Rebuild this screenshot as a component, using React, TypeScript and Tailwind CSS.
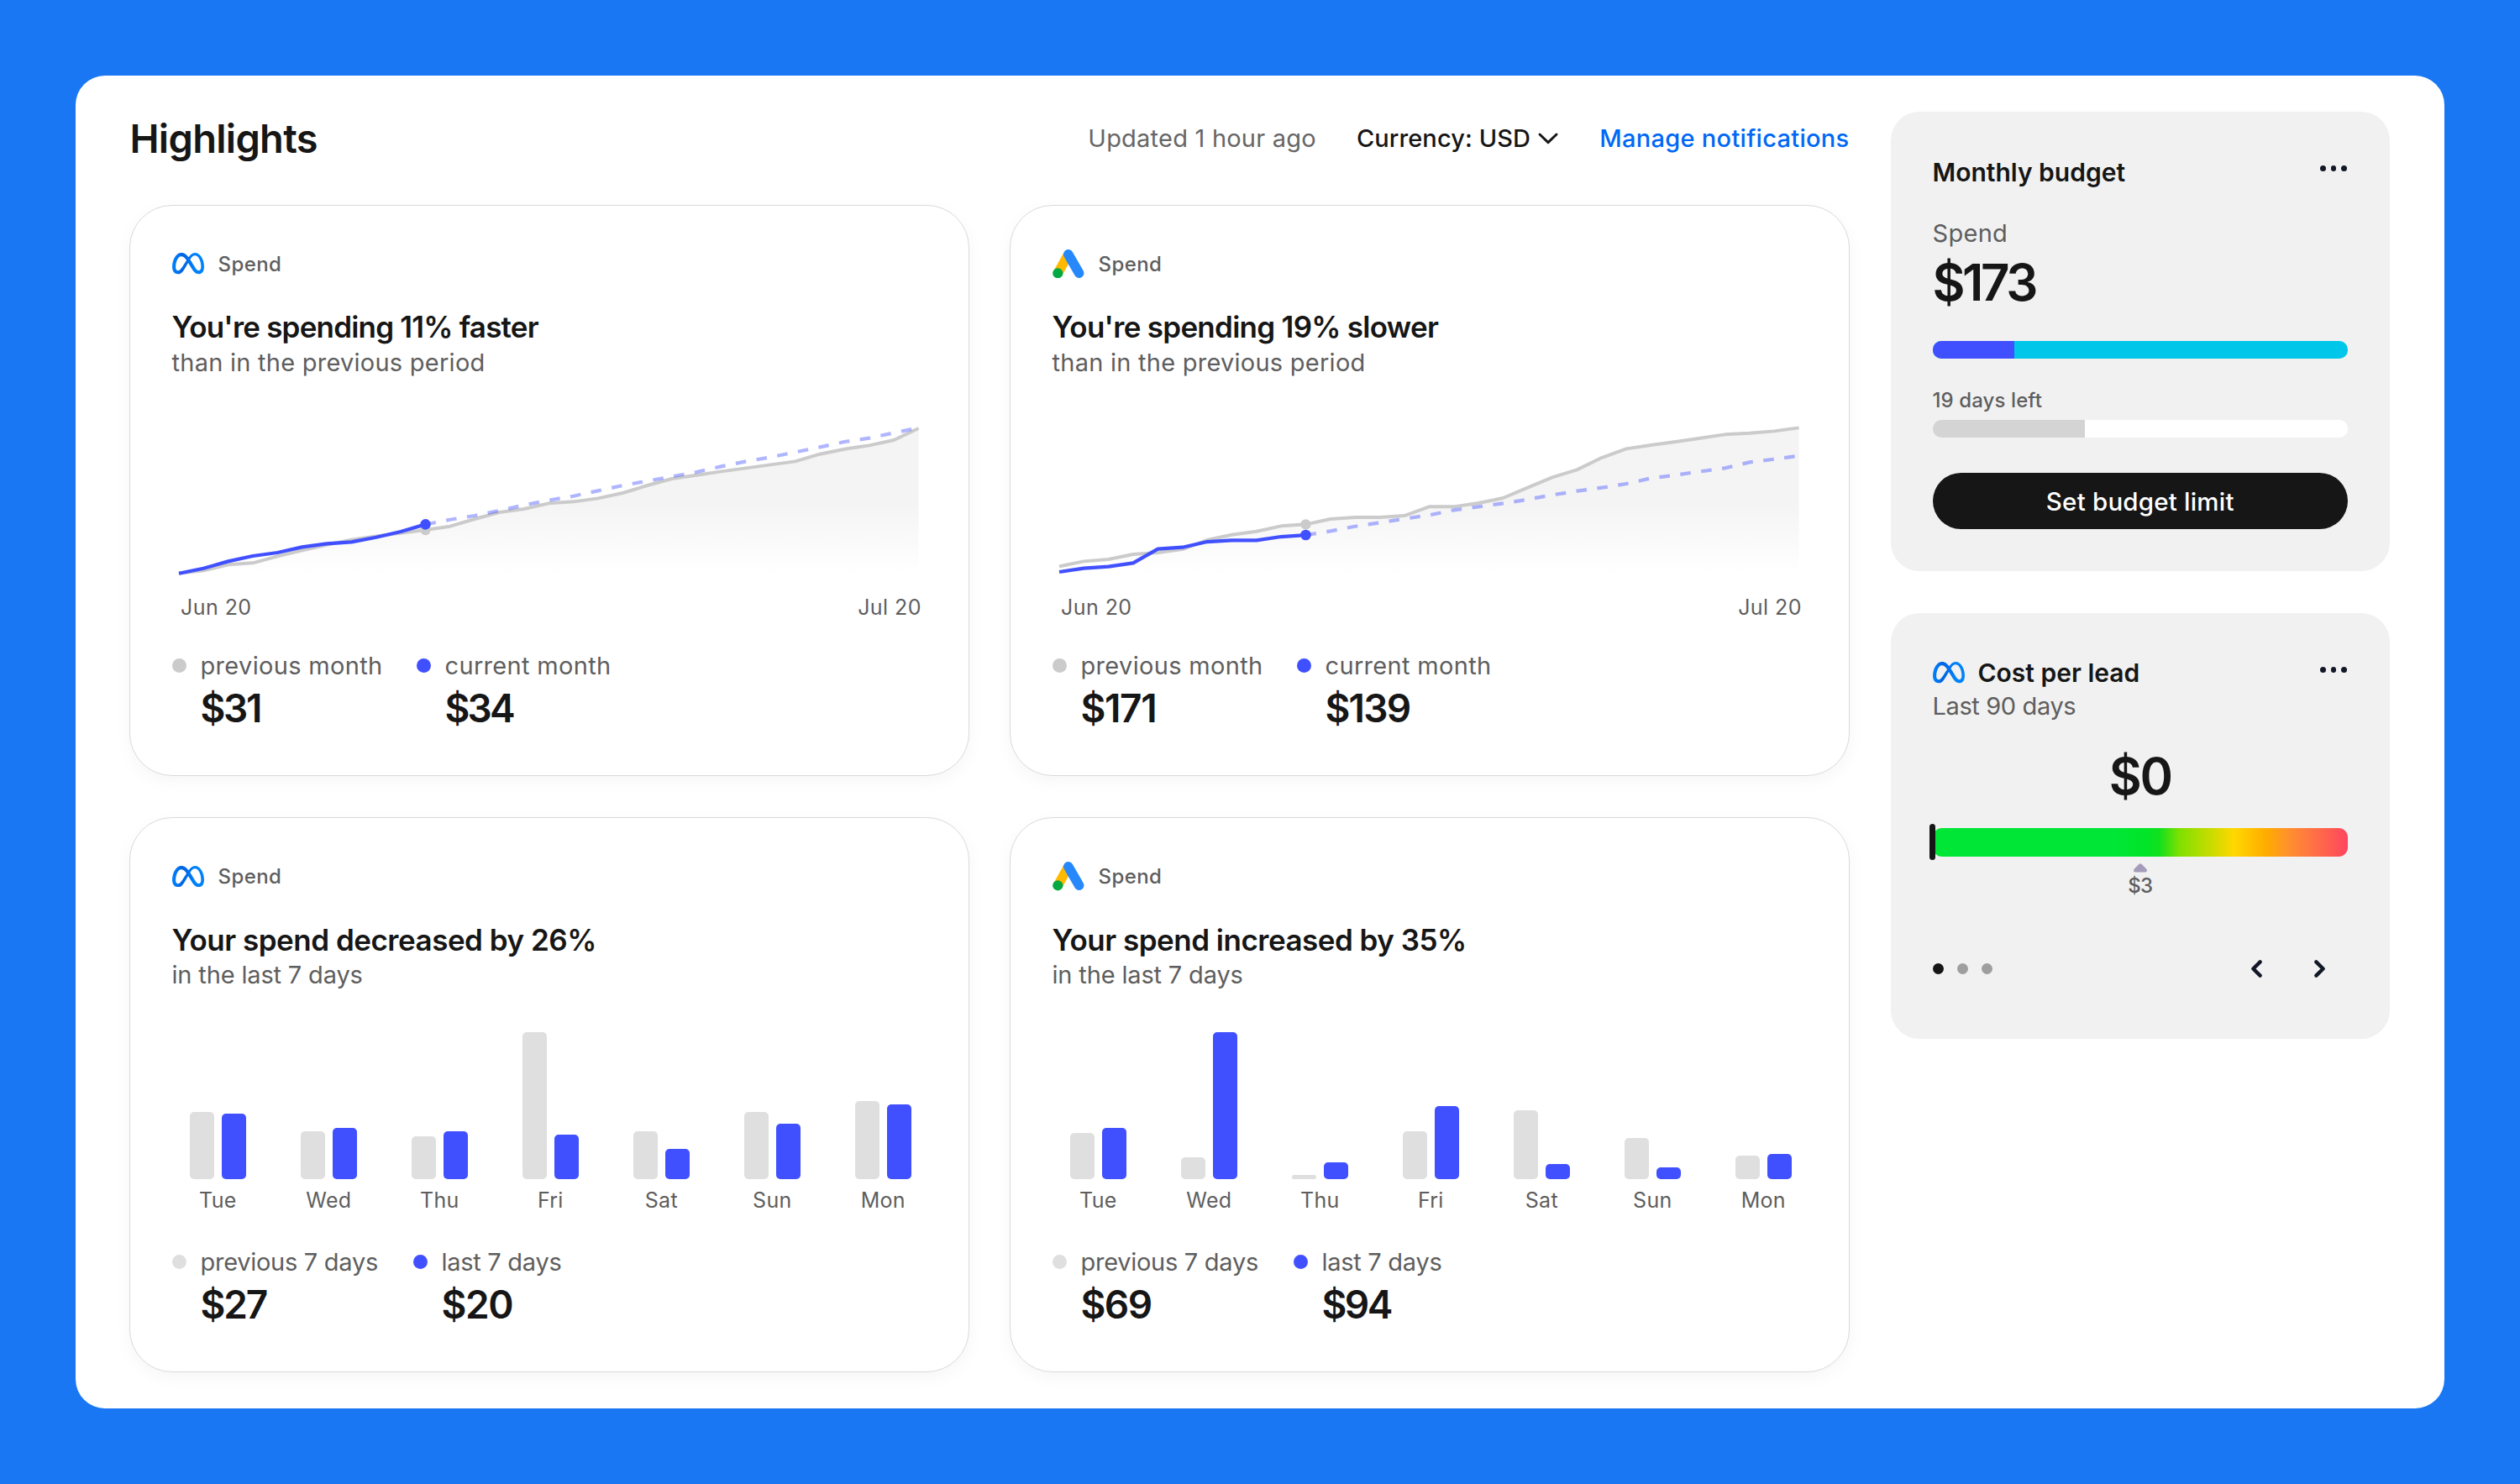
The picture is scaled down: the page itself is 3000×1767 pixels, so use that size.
import type { ReactNode } from "react";

const PREV_META = [12, 22, 43, 49, 73, 94, 114, 132, 145, 156, 167, 180, 206, 230, 242, 262, 268, 280, 299, 326, 350, 363, 376, 388, 400, 412, 438, 456, 469, 488, 530];
const CUR_META = [12, 30, 55, 74, 86, 106, 118, 124, 141, 161, 187];
const PROJ_META = [187, 204, 218, 236, 256, 273, 288, 307, 326, 342, 358, 374, 394, 412, 427, 445, 463, 482, 495, 514, 532];

const PREV_ADS = [37, 55, 62, 80, 86, 98, 131, 150, 162, 181, 187, 206, 212, 212, 218, 250, 250, 263, 281, 318, 355, 382, 425, 457, 470, 482, 495, 508, 513, 520, 532];
const CUR_ADS = [17, 30, 36, 49, 99, 105, 125, 130, 130, 143, 149];
const PROJ_ADS = [149, 163, 180, 193, 207, 220, 238, 250, 262, 276, 292, 306, 318, 332, 352, 363, 376, 388, 409, 420, 432];

const STEP = 29.35;

function MetaIcon() {
  return (
    <svg className="h-[25.3px] w-[38px] shrink-0" viewBox="0 4 24 16">
      <defs>
        <linearGradient id="meta-blue" x1="0" y1="0" x2="1" y2="0">
          <stop offset="0" stopColor="#0080fb" />
          <stop offset="0.12" stopColor="#0078f4" />
          <stop offset="0.3" stopColor="#0064e0" />
          <stop offset="0.5" stopColor="#006fee" />
          <stop offset="0.7" stopColor="#0082fb" />
          <stop offset="1" stopColor="#0082fb" />
        </linearGradient>
      </defs>
      <path
        fill="url(#meta-blue)"
        d="M6.915 4.03c-1.968 0-3.683 1.28-4.871 3.113C.704 9.208 0 11.883 0 14.449c0 .706.07 1.369.21 1.973a6.624 6.624 0 0 0 .265.86 5.297 5.297 0 0 0 .371.761c.696 1.159 1.818 1.927 3.593 1.927 1.497 0 2.633-.671 3.965-2.444.76-1.012 1.144-1.626 2.663-4.32l.756-1.339.186-.325c.061.1.121.196.183.3l2.152 3.595c.724 1.21 1.665 2.556 2.47 3.314 1.046.987 1.992 1.22 3.06 1.22 1.075 0 1.876-.355 2.455-.843a3.743 3.743 0 0 0 .81-.973c.542-.939.861-2.127.861-3.745 0-2.72-.681-5.357-2.084-7.45-1.282-1.912-2.957-2.93-4.716-2.93-1.047 0-2.088.467-3.053 1.308-.652.57-1.257 1.29-1.82 2.05-.69-.875-1.335-1.547-1.958-2.056-1.182-.966-2.315-1.303-3.454-1.303zm10.16 2.053c1.147 0 2.188.758 2.992 1.999 1.132 1.748 1.647 4.195 1.647 6.4 0 1.548-.368 2.9-1.839 2.9-.58 0-1.027-.23-1.664-1.004-.496-.601-1.343-1.878-2.832-4.358l-.617-1.028a44.908 44.908 0 0 0-1.255-1.98c.07-.109.141-.224.211-.327 1.12-1.667 2.118-2.602 3.358-2.602zm-10.201.553c1.265 0 2.058.791 2.675 1.446.307.327.737.871 1.234 1.579l-1.02 1.566c-.757 1.163-1.882 3.017-2.837 4.338-1.191 1.649-1.81 1.817-2.486 1.817-.524 0-1.038-.237-1.383-.794-.263-.426-.464-1.13-.464-2.046 0-2.221.63-4.535 1.66-6.088.454-.687.964-1.226 1.533-1.533a2.264 2.264 0 0 1 1.088-.285z"
      />
    </svg>
  );
}

function AdsIcon() {
  return (
    <svg className="h-[34.5px] w-[38px] shrink-0" viewBox="0 0 38 34.5">
      <path d="M6.4 28.2 18.4 6.4" stroke="#ffb900" strokeWidth="11.4" strokeLinecap="butt" />
      <path d="M18.8 5.9 31.6 28.2" stroke="#2688fb" strokeWidth="11.6" strokeLinecap="round" />
      <circle cx="6.3" cy="28.3" r="6.1" fill="#00a944" />
    </svg>
  );
}

type Amount = { label: string; value: string; valueClass: string };

function Legend({ className, firstClass, dotClass, prev, cur, labelClass }: { className: string; firstClass: string; dotClass: string; prev: Amount; cur: Amount; labelClass: string }) {
  return (
    <div className={`flex ${className}`}>
      <div className={`flex ${firstClass}`}>
        <span className={`mt-[10px] size-[17px] shrink-0 rounded-full ${dotClass}`} />
        <div className="ml-[17px]">
          <div className={`text-[29px] leading-[38px] text-[#5e5e5e] ${labelClass}`}>{prev.label}</div>
          <div className={`mt-px text-[46px] leading-[60px] font-semibold ${prev.valueClass}`}>{prev.value}</div>
        </div>
      </div>
      <div className="flex">
        <span className="mt-[10px] size-[17px] shrink-0 rounded-full bg-[#4150ff]" />
        <div className="ml-[17px]">
          <div className={`text-[29px] leading-[38px] text-[#5e5e5e] ${labelClass}`}>{cur.label}</div>
          <div className={`mt-px text-[46px] leading-[60px] font-semibold ${cur.valueClass}`}>{cur.value}</div>
        </div>
      </div>
    </div>
  );
}

function Card({ icon, title, sub, subClass, titleClass, height, children }: { icon: ReactNode; title: string; sub: string; subClass: string; titleClass: string; height: string; children: ReactNode }) {
  return (
    <article className={`w-[1000px] rounded-[51px] border border-[#dadada] bg-white px-[50px] pt-[49.5px] shadow-[0_6px_20px_rgba(0,0,0,0.04)] ${height}`}>
      <div className="flex h-10 items-center gap-[17px]">
        {icon}
        <span className="mt-[1px] text-[24px] leading-[30px] font-medium tracking-[0.4px] text-[#5e5e5e]">Spend</span>
      </div>
      <h2 className={`mt-[33px] text-[35px] leading-[44px] font-semibold ${titleClass}`}>{title}</h2>
      <p className={`mt-[1.5px] text-[29px] leading-[38px] text-[#5e5e5e] ${subClass}`}>{sub}</p>
      {children}
    </article>
  );
}

function points(values: number[], start = 0) {
  return values.map((v, i) => `${((i + start) * STEP).toFixed(2)},${(186.7 - v / 3).toFixed(2)}`).join(" ");
}

function LineChart({ id, prev, cur, projected }: { id: string; prev: number[]; cur: number[]; projected: number[] }) {
  const y = (v: number) => 186.7 - v / 3;
  return (
    <svg className="mt-[49.5px] ml-[8.5px] block h-[190px] w-[880.5px] overflow-visible" viewBox="0 0 880.5 190" fill="none">
      <defs>
        <linearGradient id={id} gradientUnits="userSpaceOnUse" x1="0" y1="10" x2="0" y2="184">
          <stop offset="0" stopColor="#f4f4f4" />
          <stop offset="0.5" stopColor="#f4f4f4" />
          <stop offset="1" stopColor="#ffffff" />
        </linearGradient>
      </defs>
      <polygon points={`0,187 ${points(prev)} 880.5,187`} fill={`url(#${id})`} />
      <polyline points={points(prev)} stroke="#cbcbcb" strokeWidth="4" strokeLinejoin="round" />
      <polyline points={points(projected, 10)} stroke="#4150ff" strokeOpacity="0.42" strokeWidth="4.2" strokeDasharray="12.55 12.55" />
      <circle cx={STEP * 10} cy={y(prev[10])} r="6.2" fill="#cbcbcb" />
      <polyline points={points(cur)} stroke="#4150ff" strokeWidth="4.2" strokeLinejoin="round" />
      <circle cx={STEP * 10} cy={y(cur[10])} r="6.3" fill="#4150ff" />
    </svg>
  );
}

function SpendTrend(props: { id: string; prev: number[]; cur: number[]; projected: number[]; prevAmount: Amount; curAmount: Amount }) {
  return (
    <>
      <LineChart id={props.id} prev={props.prev} cur={props.cur} projected={props.projected} />
      <div className="mt-[17px] flex w-[892.5px] justify-between pl-[10.5px] text-[25px] leading-8 tracking-[0.45px] text-[#5e5e5e]">
        <span>Jun 20</span>
        <span>Jul 20</span>
      </div>
      <Legend className="mt-[34.5px]" firstClass="w-[291px]" dotClass="bg-[#cbcbcb]" prev={props.prevAmount} cur={props.curAmount} labelClass="tracking-[0.33px]" />
    </>
  );
}

type Day = { day: string; prev: number; cur: number };

function WeekBars({ days, prevAmount, curAmount }: { days: Day[]; prevAmount: Amount; curAmount: Amount }) {
  return (
    <>
      <div className="mt-[49px] ml-[-11.2px] grid w-[924px] grid-cols-7">
        {days.map((d) => (
          <div key={d.day} className="flex flex-col items-center">
            <div className="flex h-[174.5px] items-end gap-[8.5px]">
              <div className="w-[29.3px] rounded-[5px] bg-[#dfdfdf]" style={{ height: d.prev }} />
              <div className="w-[29.3px] rounded-[5px] bg-[#4150ff]" style={{ height: d.cur }} />
            </div>
            <span className="mt-[9.5px] text-[25px] leading-8 tracking-[0.3px] text-[#5e5e5e]">{d.day}</span>
          </div>
        ))}
      </div>
      <Legend className="mt-[39px]" firstClass="w-[287px]" dotClass="bg-[#dfdfdf]" prev={prevAmount} cur={curAmount} labelClass="tracking-[-0.28px]" />
    </>
  );
}

const META_DAYS: Day[] = [
  { day: "Tue", prev: 79.7, cur: 77.8 },
  { day: "Wed", prev: 56.5, cur: 61 },
  { day: "Thu", prev: 50.7, cur: 56.5 },
  { day: "Fri", prev: 174.3, cur: 52.3 },
  { day: "Sat", prev: 56.5, cur: 36 },
  { day: "Sun", prev: 79.7, cur: 65.3 },
  { day: "Mon", prev: 92.4, cur: 88.4 },
];

const ADS_DAYS: Day[] = [
  { day: "Tue", prev: 54.7, cur: 61 },
  { day: "Wed", prev: 25.6, cur: 174.3 },
  { day: "Thu", prev: 4.7, cur: 19.4 },
  { day: "Fri", prev: 56.5, cur: 86.4 },
  { day: "Sat", prev: 81.5, cur: 17.2 },
  { day: "Sun", prev: 48.4, cur: 13.2 },
  { day: "Mon", prev: 27.5, cur: 29.7 },
];

function MoreDots() {
  return (
    <div className="flex gap-[6px] pr-[1px]">
      <span className="size-[6.6px] rounded-full bg-[#121826]" />
      <span className="size-[6.6px] rounded-full bg-[#121826]" />
      <span className="size-[6.6px] rounded-full bg-[#121826]" />
    </div>
  );
}

function MonthlyBudget() {
  return (
    <section className="h-[547px] rounded-[34px] bg-[#f1f1f1] px-[50px] pt-[51.5px]">
      <div className="flex justify-between">
        <h3 className="text-[30px] leading-10 font-semibold">Monthly budget</h3>
        <div className="mt-[12.5px]">
          <MoreDots />
        </div>
      </div>
      <p className="mt-[34px] text-[29px] leading-[38px] tracking-[0.3px] text-[#5e5e5e]">Spend</p>
      <p className="mt-[1.5px] text-[60px] leading-[76px] font-[560] tracking-[-3.4px]">$173</p>
      <div className="mt-[31.5px] flex h-[21.5px] overflow-hidden rounded-[10px] bg-[#00c6ea]">
        <div className="w-[97.5px] bg-[#4150ff]" />
      </div>
      <p className="mt-[34.5px] text-[24px] leading-[30px] font-medium tracking-[0.1px] text-[#5e5e5e]">19 days left</p>
      <div className="mt-[8.5px] flex h-[21px] overflow-hidden rounded-[10px] bg-white">
        <div className="w-[181px] bg-[#d4d4d4]" />
      </div>
      <button className="mt-[41.5px] flex h-[67.5px] w-full items-center justify-center rounded-full bg-[#161616] pt-px text-[29.5px] font-medium tracking-[0.2px] text-white">
        Set budget limit
      </button>
    </section>
  );
}

function CostPerLead() {
  return (
    <section className="h-[507px] rounded-[34px] bg-[#f1f1f1] px-[50px] pt-[51px]">
      <div className="flex justify-between">
        <div className="flex h-10 items-center gap-4">
          <MetaIcon />
          <h3 className="text-[30px] leading-10 font-semibold">Cost per lead</h3>
        </div>
        <div className="mt-[13px]">
          <MoreDots />
        </div>
      </div>
      <p className="mt-[1px] text-[29px] leading-[38px] tracking-[-0.38px] text-[#5e5e5e]">Last 90 days</p>
      <p className="mt-[25.5px] text-center text-[60px] leading-[76px] font-[560] tracking-[-2.4px]">$0</p>
      <div className="relative mt-[24.5px] h-[33.5px] rounded-[11px] bg-[linear-gradient(90deg,#00e636_0%,#00e636_44%,#00e528_51%,#10e01e_54.5%,#80e000_59.5%,#ffd800_72.5%,#ffab00_80.5%,#ff9428_85%,#ff7a40_90%,#ff455e_100%)]">
        <span className="absolute top-[-5px] left-[-3.5px] h-[43px] w-[7px] rounded-full bg-[#161616]" />
      </div>
      <div className="flex flex-col items-center">
        <svg className="mt-[8.5px] h-[10.5px] w-4" viewBox="0 0 16 10.5">
          <path d="M6.4 1Q8 -.6 9.6 1L14.9 6.3Q16 7.5 16 8.7 16 10.5 14 10.5H2Q0 10.5 0 8.7 0 7.5 1.1 6.3Z" fill="#a59cb9" />
        </svg>
        <span className="mt-px text-[24px] leading-[30px] font-medium tracking-[-0.8px] text-[#5e5e5e]">$3</span>
      </div>
      <div className="mt-[63.5px] flex h-10 items-center justify-between pr-[27px]">
        <div className="flex gap-[16.4px]">
          <span className="size-[13px] rounded-full bg-[#161616]" />
          <span className="size-[13px] rounded-full bg-[#9e9e9e]" />
          <span className="size-[13px] rounded-full bg-[#9e9e9e]" />
        </div>
        <div className="flex gap-[62.5px]">
          <svg className="h-[21px] w-[13px]" viewBox="0 0 13 21" fill="none" stroke="#121826" strokeWidth="4.4" strokeLinecap="round" strokeLinejoin="round">
            <path d="M10.6 2.4 2.4 10.5l8.2 8.1" />
          </svg>
          <svg className="h-[21px] w-[13px]" viewBox="0 0 13 21" fill="none" stroke="#121826" strokeWidth="4.4" strokeLinecap="round" strokeLinejoin="round">
            <path d="m2.4 2.4 8.2 8.1-8.2 8.1" />
          </svg>
        </div>
      </div>
    </section>
  );
}

export default function App() {
  return (
    <div className="h-[1767px] w-[3000px] overflow-hidden bg-[#1a77f4] p-[90px] font-['Inter',sans-serif] whitespace-nowrap text-[#161616]">
      <div className="flex h-[1587px] gap-[49px] rounded-[35px] bg-white pl-[63.5px]">
        <main className="w-[2048px]">
          <header className="flex h-[153.5px] items-start justify-between pt-[44.5px]">
            <h1 className="pl-[1px] text-[47px] leading-[60px] font-semibold tracking-[-0.7px]">Highlights</h1>
            <div className="flex items-center gap-12 text-[29px] leading-[60px]">
              <span className="tracking-[0.22px] text-[#666666]">Updated 1 hour ago</span>
              <span className="flex items-center gap-[8px] font-medium tracking-[0.1px]">
                Currency: USD
                <svg className="h-[16px] w-[26px]" viewBox="0 0 26 16" fill="none" stroke="#161616" strokeWidth="3" strokeLinecap="round" strokeLinejoin="round">
                  <path d="m3 3 10 9.6L23 3" />
                </svg>
              </span>
              <a className="font-medium tracking-[0.3px] text-[#0068f5]">Manage notifications</a>
            </div>
          </header>
          <div className="grid grid-cols-2 gap-x-12 gap-y-[49px]">
            <Card icon={<MetaIcon />} title="You're spending 11% faster" titleClass="tracking-[-0.8px]" sub="than in the previous period" subClass="tracking-[0.25px]" height="h-[680.5px]">
              <SpendTrend
                id="area-meta"
                prev={PREV_META}
                cur={CUR_META}
                projected={PROJ_META}
                prevAmount={{ label: "previous month", value: "$31", valueClass: "tracking-[-2.4px]" }}
                curAmount={{ label: "current month", value: "$34", valueClass: "tracking-[-2.8px]" }}
              />
            </Card>
            <Card icon={<AdsIcon />} title="You're spending 19% slower" titleClass="tracking-[-0.72px]" sub="than in the previous period" subClass="tracking-[0.25px]" height="h-[680.5px]">
              <SpendTrend
                id="area-ads"
                prev={PREV_ADS}
                cur={CUR_ADS}
                projected={PROJ_ADS}
                prevAmount={{ label: "previous month", value: "$171", valueClass: "tracking-[-1.4px]" }}
                curAmount={{ label: "current month", value: "$139", valueClass: "tracking-[-1.8px]" }}
              />
            </Card>
            <Card icon={<MetaIcon />} title="Your spend decreased by 26%" titleClass="tracking-[-0.49px]" sub="in the last 7 days" subClass="tracking-[-0.16px]" height="h-[660.5px]">
              <WeekBars
                days={META_DAYS}
                prevAmount={{ label: "previous 7 days", value: "$27", valueClass: "tracking-[-2.2px]" }}
                curAmount={{ label: "last 7 days", value: "$20", valueClass: "tracking-[-1.4px]" }}
              />
            </Card>
            <Card icon={<AdsIcon />} title="Your spend increased by 35%" titleClass="tracking-[-0.5px]" sub="in the last 7 days" subClass="tracking-[-0.16px]" height="h-[660.5px]">
              <WeekBars
                days={ADS_DAYS}
                prevAmount={{ label: "previous 7 days", value: "$69", valueClass: "tracking-[-1.6px]" }}
                curAmount={{ label: "last 7 days", value: "$94", valueClass: "tracking-[-2.6px]" }}
              />
            </Card>
          </div>
        </main>
        <aside className="flex w-[594.5px] flex-col gap-[50px] pt-[43px]">
          <MonthlyBudget />
          <CostPerLead />
        </aside>
      </div>
    </div>
  );
}
